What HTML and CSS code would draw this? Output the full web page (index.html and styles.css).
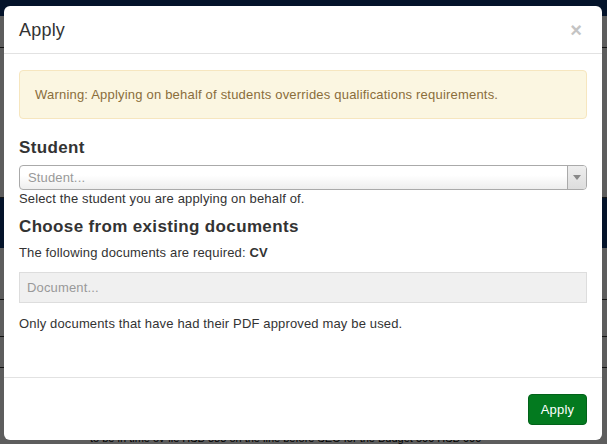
FILE: index.html
```html
<!DOCTYPE html>
<html>
<head>
<meta charset="utf-8">
<link rel="stylesheet" href="styles.css">
</head>
<body>
<div class="page">
  <div class="topbar"></div>
  <div class="bg-row bg-row-a"></div>
  <div class="bg-row bg-row-b"></div>
  <div class="bg-band"></div>
  <div class="bg-row bg-row-c"></div>
  <div class="bg-row bg-row-d"></div>
  <div class="bg-row bg-row-e"></div>
  <div class="bg-text">to be in time ov-lie HSB 888 on the line before SEO for the Budget 500 HSB 000</div>
</div>
<div class="overlay"></div>
<div class="modal">
  <div class="modal-header">
    <h4 class="modal-title">Apply</h4>
    <span class="close">&times;</span>
  </div>
  <div class="modal-body">
    <div class="alert">Warning: Applying on behalf of students overrides qualifications requirements.</div>
    <h3 class="section-title">Student</h3>
    <div class="select">
      <span class="placeholder">Student...</span>
      <span class="select-arrow"><span class="tri"></span></span>
    </div>
    <p class="help">Select the student you are applying on behalf of.</p>
    <h3 class="section-title section-title-2">Choose from existing documents</h3>
    <p class="text text-req">The following documents are required: <b>CV</b></p>
    <div class="doc-input"><span class="placeholder">Document...</span></div>
    <p class="text text-only">Only documents that have had their PDF approved may be used.</p>
  </div>
  <div class="modal-footer">
    <button class="btn">Apply</button>
  </div>
</div>
</body>
</html>
```
FILE: styles.css
```css
* { box-sizing: border-box; }
html, body { margin: 0; padding: 0; }
body {
  width: 607px;
  height: 444px;
  overflow: hidden;
  position: relative;
  font-family: "Liberation Sans", Arial, sans-serif;
  background: #ffffff;
}
.page { position: absolute; inset: 0; background: #f4f4f4; }
.topbar { height: 16px; background: #0d3270; }
.bg-row { border-bottom: 1px solid #333; }
.bg-row-a { height: 32px; }
.bg-row-b { height: 150px; }
.bg-band { height: 50px; background: #0d3270; }
.bg-row-c { height: 52px; }
.bg-row-d { height: 37px; }
.bg-row-e { height: 31px; }
.bg-text { position: absolute; left: 90px; top: 432px; font-size: 11px; line-height: 12px; color: #000; white-space: nowrap; }
.overlay { position: absolute; inset: 0; background: rgba(0,0,0,0.62); }
.modal {
  position: absolute;
  left: 4px;
  top: 6px;
  width: 598px;
  height: 434px;
  background: #fff;
  border-radius: 6px;
  display: flex;
  flex-direction: column;
  color: #333;
}
.modal-header {
  height: 48px;
  border-bottom: 1px solid #e2e2e2;
  display: flex;
  align-items: center;
  justify-content: space-between;
  padding: 0 15px;
}
.modal-title { margin: 0; font-size: 18px; font-weight: normal; color: #333; padding-top: 1px; letter-spacing: 0.2px; }
.close { font-size: 20px; font-weight: bold; color: #c4c4c4; line-height: 1; margin-right: 5px; }
.modal-body { flex: 1; padding: 16px 15px 0 15px; display: flex; flex-direction: column; }
.alert {
  height: 49px;
  background: #fbf6e1;
  border: 1px solid #f6e6bf;
  border-radius: 4px;
  color: #8a6d3b;
  font-size: 13px;
  letter-spacing: 0.2px;
  display: flex;
  align-items: center;
  padding: 0 15px 1px;
}
.section-title { margin: 19px 0 0; font-size: 17px; font-weight: bold; color: #333; line-height: 20px; letter-spacing: 0.35px; }
.section-title-2 { margin-top: 10px; }
.select {
  margin-top: 7px;
  height: 25px;
  border: 1px solid #aaa;
  border-radius: 4px;
  background: linear-gradient(#fff 40%, #eee);
  display: flex;
  align-items: center;
  justify-content: space-between;
  font-size: 13px;
  letter-spacing: 0.15px;
}
.select .placeholder { padding-left: 8px; color: #999; }
.select-arrow {
  width: 19px;
  height: 100%;
  border-left: 1px solid #aaa;
  background: linear-gradient(#eee, #ddd);
  border-radius: 0 3px 3px 0;
  display: flex;
  align-items: center;
  justify-content: center;
}
.tri { width: 0; height: 0; border-left: 4px solid transparent; border-right: 4px solid transparent; border-top: 5px solid #888; }
.help { margin: 1px 0 0; font-size: 13px; color: #333; line-height: 16px; letter-spacing: 0.15px; }
.text { font-size: 13px; color: #333; line-height: 16px; letter-spacing: 0.15px; }
.text-req { margin: 8px 0 0; }
.text-only { margin: 13px 0 0; }
.doc-input {
  margin-top: 11px;
  height: 31px;
  background: #f0f0f0;
  border: 1px solid #ddd;
  display: flex;
  align-items: center;
  font-size: 13px;
  letter-spacing: 0.15px;
}
.doc-input .placeholder { padding-left: 7px; color: #999; }
.modal-footer {
  height: 63px;
  border-top: 1px solid #e2e2e2;
  display: flex;
  align-items: center;
  justify-content: flex-end;
  padding: 0 15px;
}
.btn {
  height: 31px;
  width: 59px;
  background: #037a1f;
  border: 1px solid #02621a;
  border-radius: 4px;
  color: #fff;
  font-family: "Liberation Sans", Arial, sans-serif;
  font-size: 13px;
  letter-spacing: 0.2px;
  padding: 0;
}
```
